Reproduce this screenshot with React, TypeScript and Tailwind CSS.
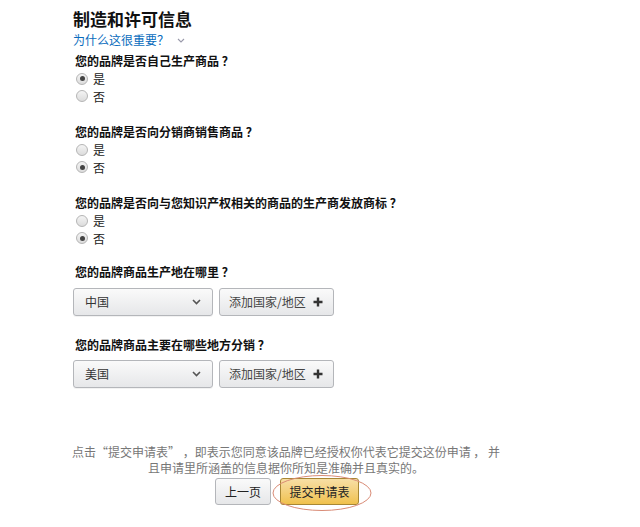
import React from "react";

const font = { fontFamily: '"Noto Sans CJK SC", "Liberation Sans", sans-serif' };

function Radio({ checked, label }: { checked: boolean; label: string }) {
  return (
    <div className="flex items-center h-[17.5px]">
      <span className="ml-[3px] w-[12px] h-[12px] rounded-full border border-[#b5b5b5] bg-gradient-to-b from-[#f4f4f4] to-[#dcdcdc] flex items-center justify-center">
        {checked && <span className="w-[5px] h-[5px] rounded-full bg-[#444]" />}
      </span>
      <span className="ml-[5px] text-[12px] leading-[17px] text-[#222]">{label}</span>
    </div>
  );
}

function Question({ text }: { text: string }) {
  return <div className="text-[12px] leading-[18px] font-bold text-[#111] ml-[2px]">{text}</div>;
}

function SelectRow({ value }: { value: string }) {
  return (
    <div className="flex gap-[6px]">
      <div className="w-[140px] h-[28px] rounded-[3px] border border-[#b4b6ba] bg-gradient-to-b from-[#fafafa] to-[#e6e7e9] flex items-center justify-between px-[11px] shadow-[0_1px_0_rgba(0,0,0,0.05)]">
        <span className="text-[12px] text-[#333]">{value}</span>
        <svg width="9" height="6" viewBox="0 0 9 6">
          <path d="M1 1 L4.5 4.5 L8 1" stroke="#555" strokeWidth="1.6" fill="none" />
        </svg>
      </div>
      <div className="w-[115px] h-[28px] rounded-[3px] border border-[#b4b6ba] bg-gradient-to-b from-[#fafafa] to-[#e6e7e9] flex items-center pl-[9px]">
        <span className="text-[12px] text-[#444]">添加国家/地区</span>
        <svg className="ml-[7px]" width="10" height="10" viewBox="0 0 10 10">
          <path d="M5 0.5 V9.5 M0.5 5 H9.5" stroke="#333" strokeWidth="2.4" />
        </svg>
      </div>
    </div>
  );
}

export default function App() {
  return (
    <div className="w-[640px] h-[527px] bg-white overflow-hidden" style={font}>
      <div className="pl-[73px] pt-[8px] flex flex-col">
        <div className="text-[17px] leading-[22px] font-bold text-[#111]">制造和许可信息</div>
        <div className="mt-[1px] flex items-center h-[18px]">
          <span className="text-[12px] text-[#0a6cbd]">为什么这很重要？</span>
          <svg className="ml-[8px]" width="8" height="5" viewBox="0 0 8 5">
            <path d="M1 1 L4 4 L7 1" stroke="#99a" strokeWidth="1.1" fill="none" />
          </svg>
        </div>
        <div className="mt-[3px]">
          <Question text="您的品牌是否自己生产商品 ？" />
        </div>
        <Radio checked label="是" />
        <Radio checked={false} label="否" />

        <div className="mt-[18px]">
          <Question text="您的品牌是否向分销商销售商品 ？" />
        </div>
        <Radio checked={false} label="是" />
        <Radio checked label="否" />

        <div className="mt-[18px]">
          <Question text="您的品牌是否向与您知识产权相关的商品的生产商发放商标 ？" />
        </div>
        <Radio checked={false} label="是" />
        <Radio checked label="否" />

        <div className="mt-[16px]">
          <Question text="您的品牌商品生产地在哪里 ？" />
        </div>
        <div className="mt-[7px]">
          <SelectRow value="中国" />
        </div>

        <div className="mt-[20px]">
          <Question text="您的品牌商品主要在哪些地方分销 ？" />
        </div>
        <div className="mt-[6px]">
          <SelectRow value="美国" />
        </div>
      </div>

      <div className="mt-[56px] w-[440px] ml-[66px] flex flex-col items-center">
        <div className="text-[12px] leading-[16px] text-[#777] text-center">
          点击“提交申请表” ，即表示您同意该品牌已经授权你代表它提交这份申请 ， 并
          <br />
          且申请里所涵盖的信息据你所知是准确并且真实的。
        </div>
        <div className="mt-[2px] flex items-center gap-[9px] ml-[2px]">
          <div className="w-[56px] h-[27px] rounded-[3px] border border-[#b4b6ba] bg-gradient-to-b from-[#fafafa] to-[#e6e7e9] flex items-center justify-center text-[12px] text-[#222]">
            上一页
          </div>
          <div className="relative">
            <div className="w-[79px] h-[27px] rounded-[3px] border border-[#a88734] bg-gradient-to-b from-[#f7dfa5] to-[#f0c14b] flex items-center justify-center text-[12px] text-[#222]">
              提交申请表
            </div>
            <svg className="absolute left-[-8px] top-[-4px] pointer-events-none" width="100" height="38" viewBox="0 0 100 38">
              <ellipse cx="50" cy="19" rx="49" ry="17.5" stroke="#d98b76" strokeWidth="1" fill="none" />
            </svg>
          </div>
        </div>
      </div>
    </div>
  );
}
